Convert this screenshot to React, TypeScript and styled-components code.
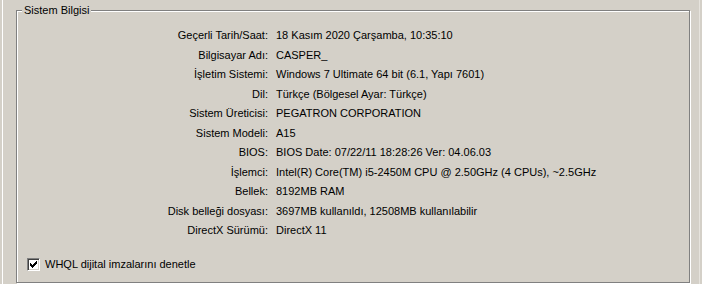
import { Fragment } from 'react';
import styled, { createGlobalStyle } from 'styled-components';

const GlobalStyle = createGlobalStyle`
    html, body {
        margin: 0;
        padding: 0;
        background: #d4d0c8;
    }

    body {
        font-family: 'Liberation Sans', Arial, sans-serif;
        font-size: 11px;
        color: #000;
    }
`;

const TabPage = styled.div`
    box-sizing: border-box;
    width: 698px;
    height: 284px;
    margin-left: 2px;
    border-left: 1px solid #ffffff;
    border-right: 1px solid #e6e3dd;
    padding-top: 10px;
    overflow: hidden;
`;

const GroupBox = styled.section`
    position: relative;
    box-sizing: border-box;
    width: 674px;
    height: 273px;
    margin-left: 13px;
    border: 1px solid #808080;
    box-shadow:
        inset 1px 1px 0 #ffffff,
        1px 1px 0 #ffffff;
    padding: 15px 0 0 1px;
`;

const Legend = styled.span`
    position: absolute;
    top: -7px;
    left: 5px;
    padding: 0 2px;
    line-height: 13px;
    background: #d4d0c8;
`;

const InfoGrid = styled.dl`
    display: grid;
    grid-template-columns: 250px 1fr;
    grid-auto-rows: 19.5px;
    column-gap: 8px;
    margin: 0;
`;

const Label = styled.dt`
    text-align: right;
    line-height: 19.5px;
    white-space: nowrap;
`;

const Value = styled.dd`
    margin: 0;
    line-height: 19.5px;
    white-space: nowrap;
`;

const CheckRow = styled.label`
    display: flex;
    align-items: center;
    gap: 5px;
    margin-top: 17px;
    padding-left: 9px;
    height: 13px;
    line-height: 13px;
`;

const CheckBox = styled.span`
    box-sizing: border-box;
    width: 13px;
    height: 13px;
    flex: none;
    background: #ffffff;
    border-style: solid;
    border-width: 1px;
    border-color: #808080 #ffffff #ffffff #808080;
    box-shadow:
        inset 1px 1px 0 #404040,
        inset -1px -1px 0 #d4d0c8;

    & svg {
        display: block;
    }
`;

const rows: [string, string][] = [
    ['Geçerli Tarih/Saat:', '18 Kasım 2020 Çarşamba, 10:35:10'],
    ['Bilgisayar Adı:', 'CASPER_'],
    ['İşletim Sistemi:', 'Windows 7 Ultimate 64 bit (6.1, Yapı 7601)'],
    ['Dil:', 'Türkçe (Bölgesel Ayar: Türkçe)'],
    ['Sistem Üreticisi:', 'PEGATRON CORPORATION'],
    ['Sistem Modeli:', 'A15'],
    ['BIOS:', 'BIOS Date: 07/22/11 18:28:26 Ver: 04.06.03'],
    ['İşlemci:', 'Intel(R) Core(TM) i5-2450M CPU @ 2.50GHz (4 CPUs), ~2.5GHz'],
    ['Bellek:', '8192MB RAM'],
    ['Disk belleği dosyası:', '3697MB kullanıldı, 12508MB kullanılabilir'],
    ['DirectX Sürümü:', 'DirectX 11'],
];

const App = () => {
    return (
        <>
            <GlobalStyle />
            <TabPage>
                <GroupBox>
                    <Legend>Sistem Bilgisi</Legend>
                    <InfoGrid>
                        {rows.map(([label, value]) => (
                            <Fragment key={label}>
                                <Label>{label}</Label>
                                <Value>{value}</Value>
                            </Fragment>
                        ))}
                    </InfoGrid>
                    <CheckRow>
                        <CheckBox>
                            <svg width="11" height="11" viewBox="0 0 11 11" shapeRendering="crispEdges">
                                <path
                                    d="M2 4h1v3H2z M3 5h1v3H3z M4 6h1v3H4z M5 5h1v3H5z M6 4h1v3H6z M7 3h1v3H7z M8 2h1v3H8z"
                                    fill="#000"
                                />
                            </svg>
                        </CheckBox>
                        WHQL dijital imzalarını denetle
                    </CheckRow>
                </GroupBox>
            </TabPage>
        </>
    );
};

export default App;
